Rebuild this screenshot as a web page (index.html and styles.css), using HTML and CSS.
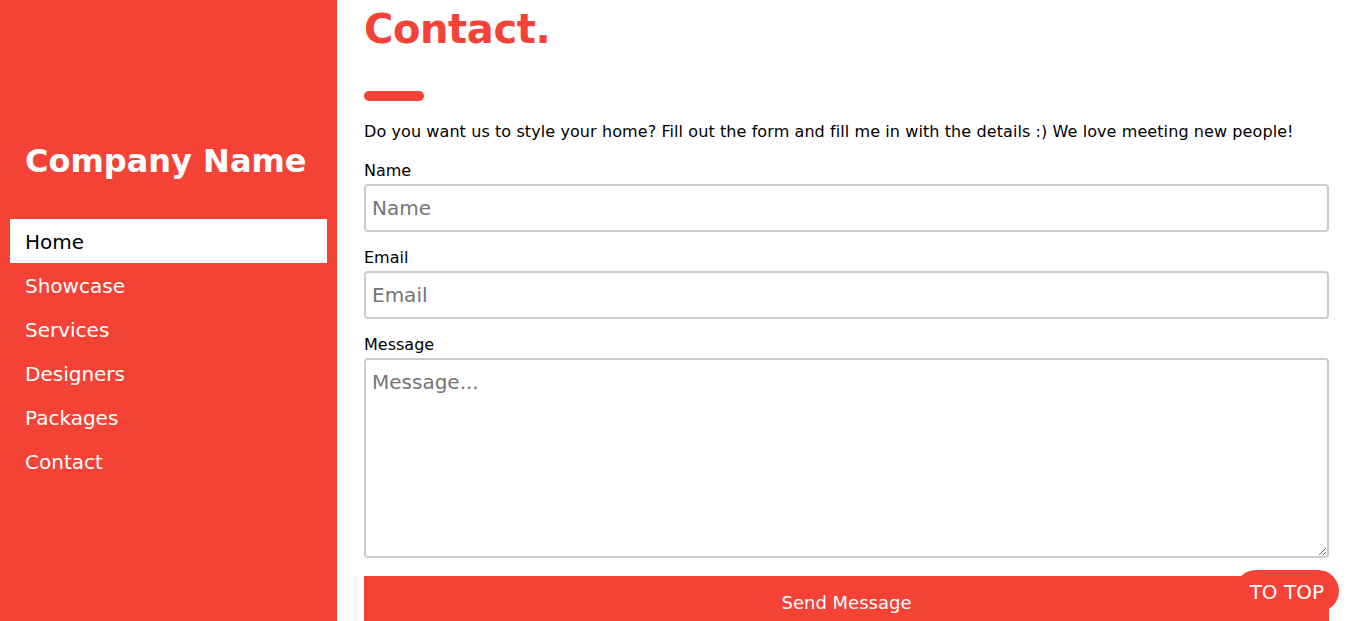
FILE: index.html
```html
<!DOCTYPE html>
<html lang="en">
<head>
<meta charset="utf-8">
<title>Contact</title>
<link rel="stylesheet" href="styles.css">
</head>
<body>
<div class="page">
  <nav class="sidebar">
    <h3 class="brand">Company Name</h3>
    <div class="menu">
      <a class="item active" href="#">Home</a>
      <a class="item" href="#">Showcase</a>
      <a class="item" href="#">Services</a>
      <a class="item" href="#">Designers</a>
      <a class="item" href="#">Packages</a>
      <a class="item" href="#">Contact</a>
    </div>
  </nav>
  <main class="main">
    <h1 class="title">Contact.</h1>
    <hr class="rule">
    <p class="intro">Do you want us to style your home? Fill out the form and fill me in with the details :) We love meeting new people!</p>
    <form class="form">
      <div class="field">
        <label class="label">Name</label>
        <input class="input" type="text" placeholder="Name">
      </div>
      <div class="field">
        <label class="label">Email</label>
        <input class="input" type="text" placeholder="Email">
      </div>
      <div class="field">
        <label class="label">Message</label>
        <textarea class="input textarea" placeholder="Message..."></textarea>
      </div>
      <button class="send" type="button">Send Message</button>
    </form>
  </main>
</div>
<a class="totop" href="#">TO TOP</a>
</body>
</html>
```
FILE: styles.css
```css
html, body {
  margin: 0;
  padding: 0;
  height: 100%;
  overflow: hidden;
}
body {
  font-family: Verdana, "DejaVu Sans", sans-serif;
  font-size: 16px;
  color: #000;
  background: #fff;
}
.page {
  display: flex;
  height: 621px;
  overflow: hidden;
}
.sidebar {
  width: 337px;
  flex: none;
  background: #f44336;
  box-sizing: border-box;
  padding: 0 10px;
}
.brand {
  margin: 0;
  padding: 140px 0 0 15px;
  height: 219px;
  box-sizing: border-box;
  color: #fff;
  font-size: 32px;
  font-weight: bold;
  line-height: 42px;
}
.menu {
  display: flex;
  flex-direction: column;
}
.item {
  display: block;
  height: 44px;
  box-sizing: border-box;
  padding: 2px 0 0 15px;
  line-height: 42px;
  color: #fff;
  text-decoration: none;
  font-size: 20px;
}
.item.active {
  background: #fff;
  color: #000;
}
.main {
  flex: 1;
  padding: 0 20px 0 27px;
  display: block;
}
.title {
  margin: 0;
  padding-top: 5px;
  height: 91px;
  box-sizing: border-box;
  color: #f44336;
  font-size: 40px;
  letter-spacing: -0.4px;
  line-height: 48px;
  font-weight: bold;
}
.rule {
  margin: 0;
  width: 60px;
  height: 10px;
  border: 0;
  border-radius: 5px;
  background: #f44336;
}
.intro {
  margin: 19px 0 0;
  line-height: 24px;
  letter-spacing: 0.09px;
}
.form {
  display: flex;
  flex-direction: column;
  margin-top: 15px;
}
.field {
  display: flex;
  flex-direction: column;
  flex: none;
  margin-bottom: 14px;
}
.label {
  line-height: 24px;
  height: 24px;
  margin-bottom: 1px;
}
.input {
  height: 48px;
  flex: none;
  box-sizing: border-box;
  border: 2px solid #ccc;
  border-radius: 4px;
  padding: 0 6px;
  font-family: Verdana, "DejaVu Sans", sans-serif;
  font-size: 20px;
  color: #000;
  outline: none;
}
.input::placeholder {
  color: #757575;
}
.textarea {
  height: 200px;
  padding-top: 10px;
  resize: vertical;
}
.send {
  margin-top: 4px;
  height: 52px;
  flex: none;
  border: 0;
  background: #f44336;
  color: #fff;
  font-family: Verdana, "DejaVu Sans", sans-serif;
  font-size: 18px;
  padding-top: 2px;
}
.totop {
  position: fixed;
  right: 10px;
  top: 570px;
  height: 42px;
  padding: 0 15px;
  background: #f44336;
  color: #fff;
  text-decoration: none;
  font-size: 20px;
  line-height: 45px;
  border-radius: 21px;
}
```
